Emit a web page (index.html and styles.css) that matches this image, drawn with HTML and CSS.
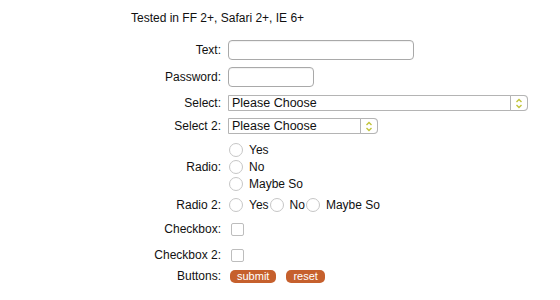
FILE: index.html
```html
<!DOCTYPE html>
<html lang="en">
<head>
    <meta charset="UTF-8">
    <title>Niceforms Test</title>
    <link rel="stylesheet" href="styles.css">
</head>
<body>
    <div class="page">
        <p class="note">Tested in FF 2+, Safari 2+, IE 6+</p>

        <form class="niceform">
            <!-- text fields -->
            <div class="row row-text">
                <label class="lbl">Text:</label>
                <input type="text" class="txt txt-long">
            </div>
            <div class="row row-text">
                <label class="lbl">Password:</label>
                <input type="password" class="txt txt-short">
            </div>

            <!-- selects -->
            <div class="row row-select">
                <label class="lbl">Select:</label>
                <div class="sel sel-long">
                    <select><option>Please Choose</option></select>
                    <span class="sel-arrow">
                        <svg width="8" height="11" viewBox="0 0 8 11"><path d="M1.5 4 L4 1.5 L6.5 4 M1.5 7 L4 9.5 L6.5 7" fill="none" stroke="#c2c43a" stroke-width="1.4"/></svg>
                    </span>
                </div>
            </div>
            <div class="row row-select">
                <label class="lbl">Select 2:</label>
                <div class="sel sel-short">
                    <select><option>Please Choose</option></select>
                    <span class="sel-arrow">
                        <svg width="8" height="11" viewBox="0 0 8 11"><path d="M1.5 4 L4 1.5 L6.5 4 M1.5 7 L4 9.5 L6.5 7" fill="none" stroke="#c2c43a" stroke-width="1.4"/></svg>
                    </span>
                </div>
            </div>

            <!-- radios -->
            <div class="row row-radio">
                <label class="lbl">Radio:</label>
                <div class="stack">
                    <label class="opt"><input type="radio" name="r1">Yes</label>
                    <label class="opt"><input type="radio" name="r1">No</label>
                    <label class="opt"><input type="radio" name="r1">Maybe So</label>
                </div>
            </div>
            <div class="row row-radio2">
                <label class="lbl">Radio 2:</label>
                <div class="inline">
                    <label class="opt"><input type="radio" name="r2">Yes</label>
                    <label class="opt"><input type="radio" name="r2">No</label>
                    <label class="opt"><input type="radio" name="r2">Maybe So</label>
                </div>
            </div>

            <!-- checkboxes -->
            <div class="row row-check">
                <label class="lbl">Checkbox:</label>
                <input type="checkbox" class="chk">
            </div>
            <div class="row row-check last">
                <label class="lbl">Checkbox 2:</label>
                <input type="checkbox" class="chk">
            </div>

            <!-- buttons -->
            <div class="row row-buttons">
                <label class="lbl">Buttons:</label>
                <div class="btns">
                    <button type="button" class="btn">submit</button>
                    <button type="button" class="btn">reset</button>
                </div>
            </div>
        </form>
    </div>
</body>
</html>
```

FILE: styles.css
```css
* {
    margin: 0;
    padding: 0;
    box-sizing: border-box;
}

body {
    font-family: "Liberation Sans", Arial, sans-serif;
    font-size: 12px;
    color: #111;
    background: #fff;
}

.page {
    padding: 11px 0 0 131px;
}

.note {
    line-height: 14px;
    margin-bottom: 15px;
}

/* rows */
.row {
    display: grid;
    grid-template-columns: 90px auto;
    column-gap: 7px;
    align-items: center;
}

.lbl {
    text-align: right;
    line-height: 14px;
}

.row-text { margin-bottom: 7px; }
.row-text + .row-text { margin-bottom: 8px; }
.row-select { margin-bottom: 7px; }
.row-select + .row-select { margin-bottom: 9px; }
.row-radio { margin-bottom: 7px; }
.row-radio2 { margin-bottom: 10px; }
.row-check { margin-bottom: 12px; }
.row-check.last { margin-bottom: 7px; }

/* text inputs */
.txt {
    height: 20px;
    border: 1px solid #a9a9a9;
    border-radius: 4px;
    box-shadow: inset 0 1px 1px rgba(0,0,0,0.06);
    background: #fff;
    outline: none;
}

.txt-long { width: 186px; }
.txt-short { width: 86px; }

/* selects */
.sel {
    position: relative;
    height: 16px;
}

.sel-long { width: 300px; }
.sel-short { width: 150px; }

.sel select {
    appearance: none;
    -webkit-appearance: none;
    width: 100%;
    height: 16px;
    border: 1px solid #b4b4b4;
    border-radius: 0 4px 4px 0;
    background: #fff;
    font-family: "Liberation Sans", Arial, sans-serif;
    font-size: 12.5px;
    color: #111;
    padding: 0 0 0 3px;
    line-height: 14px;
    outline: none;
}

.sel-arrow {
    position: absolute;
    top: 0;
    right: 0;
    width: 18px;
    height: 16px;
    border: 1px solid #b4b4b4;
    border-radius: 0 4px 4px 0;
    background: #fff;
    display: flex;
    align-items: center;
    justify-content: center;
}

/* radios */
.stack {
    display: flex;
    flex-direction: column;
    gap: 3px;
}

.inline {
    display: flex;
    gap: 1px;
}

.opt {
    display: flex;
    align-items: center;
    gap: 6px;
    line-height: 13px;
}

.opt input {
    appearance: none;
    -webkit-appearance: none;
    width: 14px;
    height: 14px;
    border: 1px solid #c6c6c6;
    border-radius: 50%;
    background: #fff;
    margin-left: 1px;
}

.inline .opt + .opt input {
    margin-left: 0;
}

/* checkboxes */
.chk {
    appearance: none;
    -webkit-appearance: none;
    width: 13px;
    height: 13px;
    border: 1px solid #bdbdbd;
    border-radius: 2px;
    background: #fff;
    margin-left: 3px;
}

/* buttons */
.btns {
    display: flex;
    gap: 10px;
    padding-left: 2px;
}

.btn {
    border: none;
    background: #c6602d;
    color: #fff;
    font-family: "Liberation Sans", Arial, sans-serif;
    font-size: 11px;
    line-height: 13px;
    height: 13px;
    padding: 0 7px;
    border-radius: 5px;
}
```
